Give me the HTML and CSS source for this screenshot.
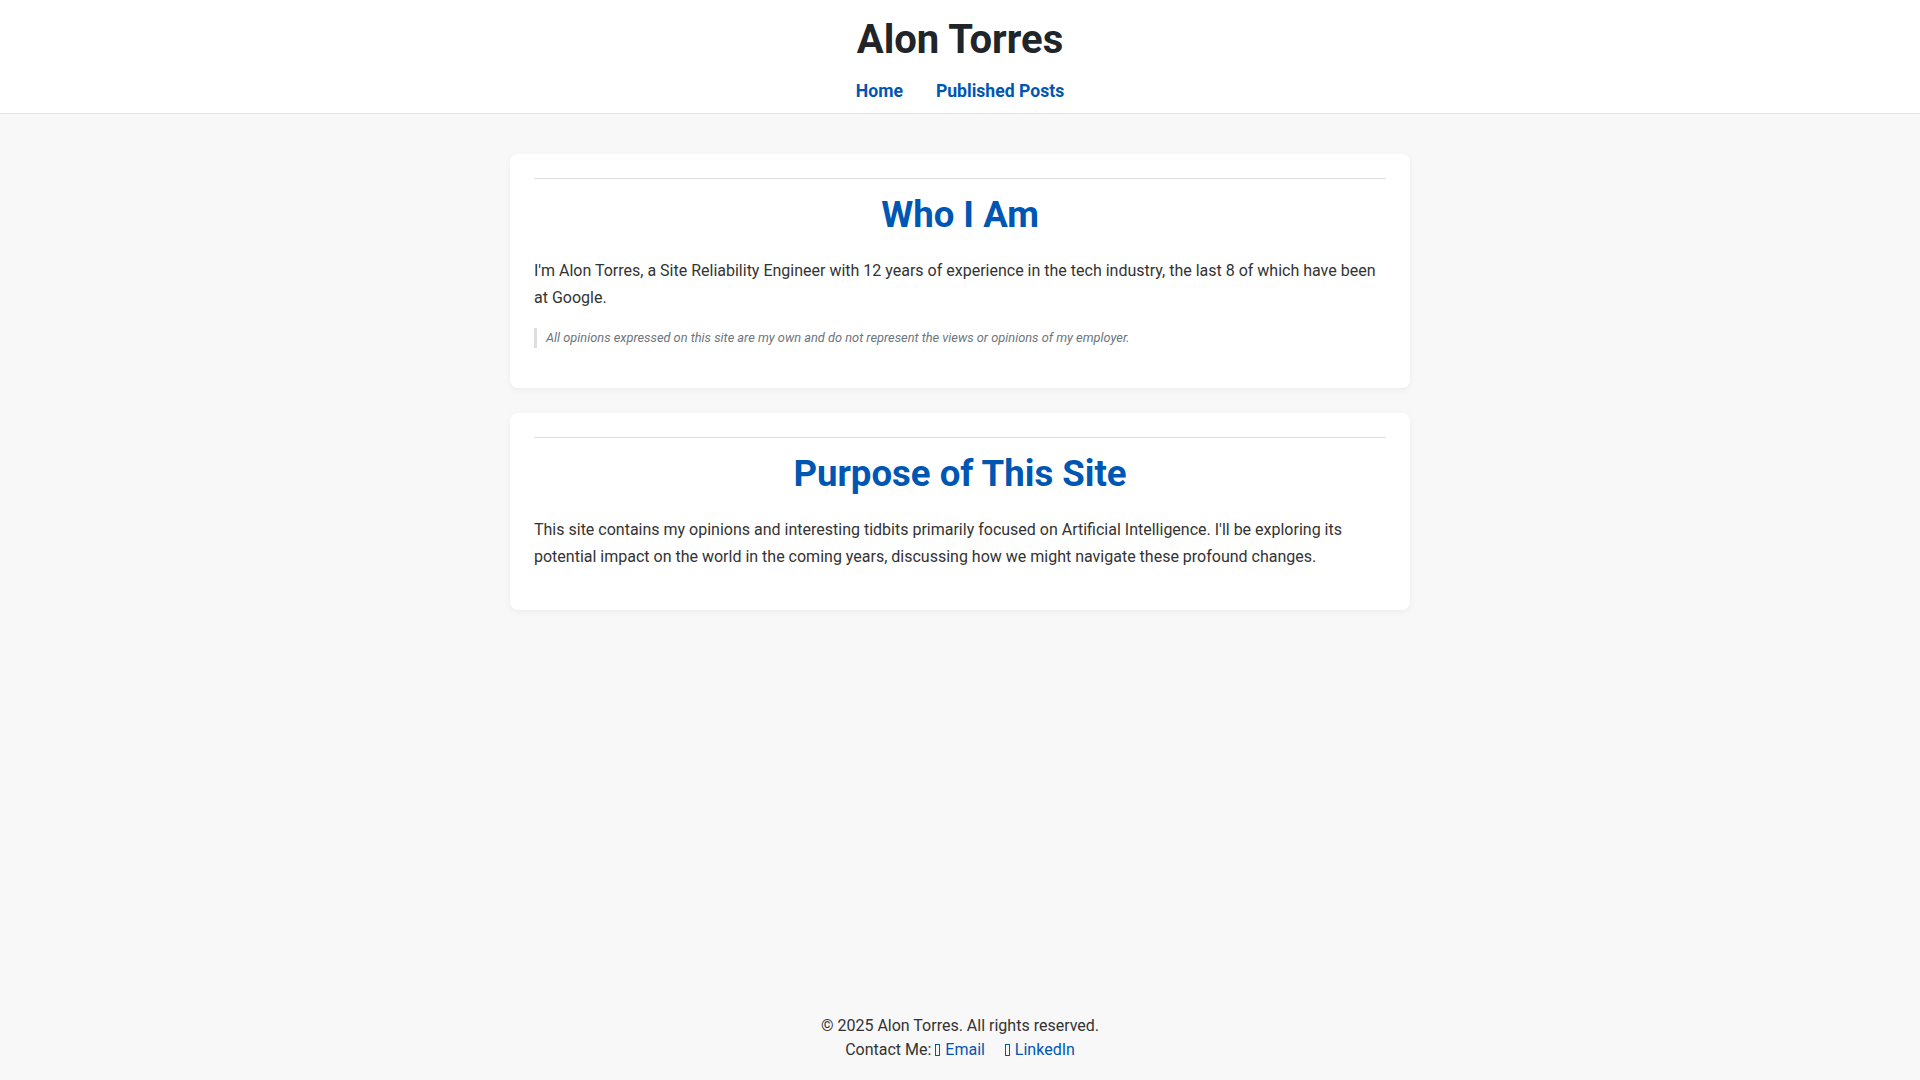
FILE: index.html
```html
<!DOCTYPE html>
<html lang="en">
<head>
<meta charset="utf-8">
<title>Alon Torres</title>
<link rel="stylesheet" href="styles.css">
</head>
<body>
<header class="site-header">
  <h1 class="site-title">Alon Torres</h1>
  <nav class="site-nav">
    <a href="#">Home</a>
    <a href="#">Published Posts</a>
  </nav>
</header>
<main class="content">
  <section class="card">
    <hr class="card-rule">
    <h2 class="card-title">Who I Am</h2>
    <p class="card-text">I'm Alon Torres, a Site Reliability Engineer with 12 years of experience in the tech industry, the last 8 of which have been at Google.</p>
    <blockquote class="disclaimer">All opinions expressed on this site are my own and do not represent the views or opinions of my employer.</blockquote>
  </section>
  <section class="card">
    <hr class="card-rule">
    <h2 class="card-title">Purpose of This Site</h2>
    <p class="card-text">This site contains my opinions and interesting tidbits primarily focused on Artificial Intelligence. I'll be exploring its potential impact on the world in the coming years, discussing how we might navigate these profound changes.</p>
  </section>
</main>
<footer class="site-footer">
  <p class="copyright">&copy; 2025 Alon Torres. All rights reserved.</p>
  <p class="contact">Contact Me: <a href="#" class="contact-link"><span class="tofu"></span> Email</a> <a href="#" class="contact-link second"><span class="tofu"></span> LinkedIn</a></p>
</footer>
</body>
</html>
```
FILE: styles.css
```css
* { box-sizing: border-box; }

html, body {
  margin: 0;
  padding: 0;
}

body {
  min-height: 100vh;
  display: flex;
  flex-direction: column;
  background: #f8f8f8;
  color: #333333;
  font-family: Roboto, "Liberation Sans", Arial, sans-serif;
  font-size: 16px;
}

.site-header {
  background: #ffffff;
  border-bottom: 1px solid #e3e3e3;
  text-align: center;
  padding: 16px 0 9px;
}

.site-title {
  margin: 0 0 14px;
  font-size: 40px;
  line-height: 48px;
  font-weight: 700;
  color: #212529;
}

.site-nav {
  display: flex;
  justify-content: center;
  gap: 33px;
  line-height: 26px;
}

.site-nav a {
  color: #0056b3;
  text-decoration: none;
  font-weight: 700;
  font-size: 17.6px;
}

.content {
  flex: 1;
  width: 900px;
  margin: 40px auto 0;
  display: flex;
  flex-direction: column;
  gap: 25px;
}

.card {
  background: #ffffff;
  border-radius: 8px;
  box-shadow: 0 2px 6px rgba(0, 0, 0, 0.05);
  padding: 24px 24px 24px;
}

.card-rule {
  margin: 0 0 14px;
  border: 0;
  border-top: 1px solid #e0e0e0;
}

.card-title {
  margin: 0 0 21px;
  text-align: center;
  color: #0056b3;
  font-size: 36.6px;
  line-height: 43px;
  font-weight: 700;
}

.card-text {
  margin: 0 0 16px;
  line-height: 27px;
  color: #333333;
}

.disclaimer {
  margin: 17px 0 16px;
  padding: 0 0 0 9px;
  border-left: 3px solid #dddddd;
  font-style: italic;
  font-size: 12.8px;
  line-height: 20px;
  color: #6c757d;
}

.site-footer {
  text-align: center;
  padding: 0 0 18px;
  color: #333333;
  line-height: 24px;
}

.site-footer p {
  margin: 0;
}

.contact-link {
  color: #0056b3;
  text-decoration: none;
}

.contact-link.second {
  margin-left: 16px;
}

.tofu {
  display: inline-block;
  width: 5px;
  height: 12px;
  border: 1px solid #0056b3;
  vertical-align: -1px;
  margin-right: 1px;
}
```
